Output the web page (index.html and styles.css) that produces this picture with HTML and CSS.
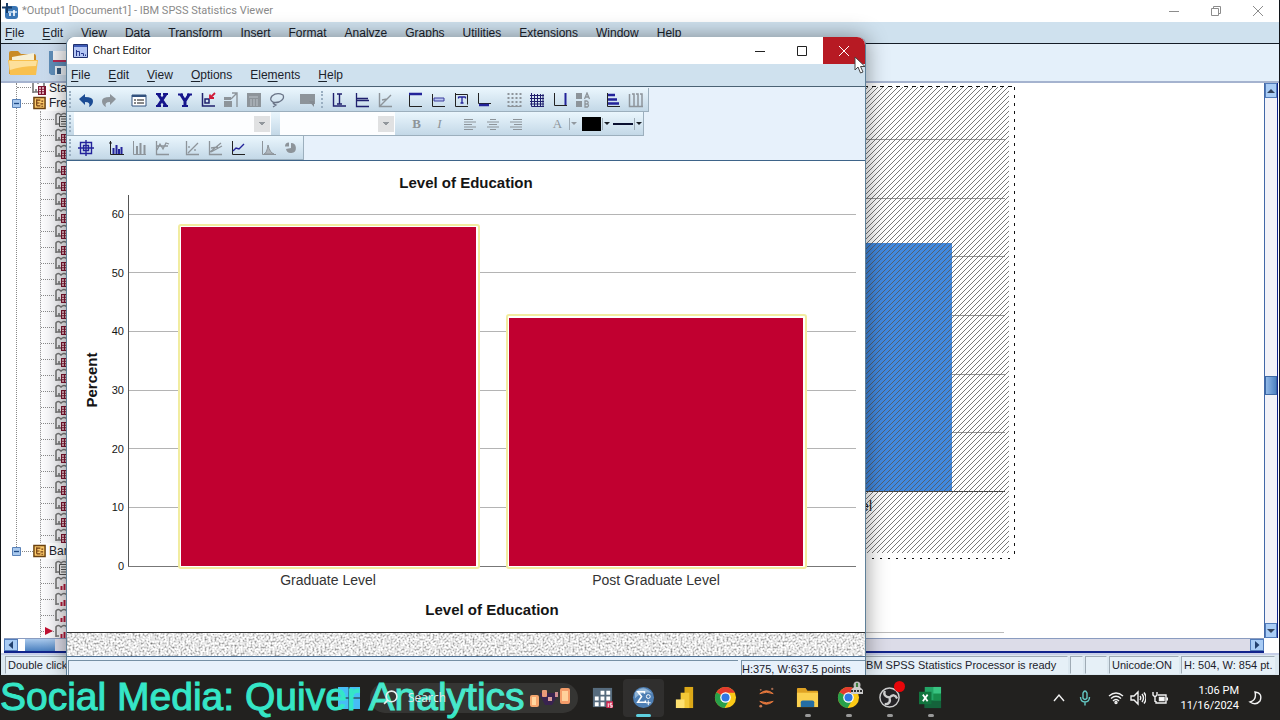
FILE: index.html
```html
<!DOCTYPE html>
<html lang="en">
<head>
<meta charset="utf-8">
<title>Output1 - IBM SPSS Statistics Viewer</title>
<link rel="stylesheet" href="styles.css">
</head>
<body>
<svg class="defs" aria-hidden="true">
  <symbol id="i-book" viewBox="0 0 16 16"><path d="M2 14V4q2-3 5 0q3-3 6 0v4M2 13h5M5 10v3" fill="none" stroke="#777" stroke-width="1.6"/><path d="M7 7h8v9H7z" fill="#7d1530"/><path d="M8 9h2M11 9h2M8 11.500h2M11 11.500h2M8 14h2M11 14h2" stroke="#f3d4da" stroke-width="1.400"/></symbol>
  <symbol id="i-note" viewBox="0 0 16 16"><path d="M2 14V4q2-3 5 0q3-3 6 0v4M2 13h3" fill="none" stroke="#777" stroke-width="1.6"/><path d="M5.500 5.500h9v10h-9z" fill="#eee" stroke="#555"/><path d="M7 8h6M7 10.500h6M7 13h6" stroke="#555"/></symbol>
  <symbol id="i-bars" viewBox="0 0 16 16"><path d="M2 14V4q2-3 5 0q3-3 6 0v4M2 13h3" fill="none" stroke="#777" stroke-width="1.6"/><path d="M6 6h9v10H6z" fill="#f8f2f3"/><path d="M7.500 11v4M10.500 9v6M13.500 6v9" stroke="#b01838" stroke-width="2"/></symbol>
  <symbol id="i-log" viewBox="0 0 14 14"><path d="M1 1h12v12H1z" fill="#fbc96a" stroke="#6b4210" stroke-width="1.600"/><path d="M4 3v7M4 4h4M4 7h3M4 10h4M9 5h2M8 8h3M9 10.500h2" stroke="#713d10" stroke-width="1.300"/></symbol>
  <symbol id="i-minus" viewBox="0 0 9 9"><path d="M.5.5h8v8h-8z" fill="#a9c9ee" stroke="#5a82b8"/><path d="M2 4.500h5" stroke="#204a86" stroke-width="1.300"/></symbol>
  <symbol id="i-chrome" viewBox="0 0 24 24"><circle cx="12" cy="12" r="11" fill="#fbc916"/><path d="M12 12L2.500 6.500A11 11 0 0 1 21.500 6.500H12z" fill="#e33b2e"/><path d="M2.500 6.500A11 11 0 0 0 11 23l5-8.500L12 12z" fill="#27a04b"/><path d="M12 6.500h9.500" stroke="#e33b2e"/><circle cx="12" cy="12" r="5.500" fill="#fff"/><circle cx="12" cy="12" r="4.200" fill="#2f78e4"/></symbol>
  <symbol id="i-left" viewBox="0 0 8 8"><path d="M6 0v8L1.500 4z" fill="#22406e"/></symbol>
  <symbol id="i-right" viewBox="0 0 8 8"><path d="M2 0v8l4.500-4z" fill="#22406e"/></symbol>
  <symbol id="i-up" viewBox="0 0 8 8"><path d="M0 6h8L4 2z" fill="#33425c"/></symbol>
  <symbol id="i-down" viewBox="0 0 8 8"><path d="M0 2h8L4 6z" fill="#33425c"/></symbol>
</svg>

<div class="desktop">
  <section class="viewer" aria-label="Output viewer">
    <header class="titlebar">
      <svg class="app-icon" viewBox="0 0 16 16"><rect x="3" y="3" width="13" height="13" rx="3" fill="#3a76b5"/><path d="M6 9h9" stroke="#a9c9e8" stroke-width="2"/><path d="M8 13v-3M12 13V7" stroke="#fff" stroke-width="1.600"/><path d="M5 0v10M0 4.500h10" stroke="#173b66" stroke-width="2"/></svg>
      <h1>*Output1 [Document1] - IBM SPSS Statistics Viewer</h1>
      <div class="win-controls">
        <button aria-label="Minimize"><svg viewBox="0 0 10 10"><path d="M0 5.500h10"/></svg></button>
        <button aria-label="Restore"><svg viewBox="0 0 10 10"><path d="M.5 2.500h7v7h-7zM2.500 2.500v-2h7v7h-2"/></svg></button>
        <button aria-label="Close"><svg viewBox="0 0 10 10"><path d="M0 0l10 10M10 0L0 10"/></svg></button>
      </div>
    </header>
    <nav class="menubar">
      <button><u>F</u>ile</button><button><u>E</u>dit</button><button><u>V</u>iew</button><button><u>D</u>ata</button><button><u>T</u>ransform</button><button><u>I</u>nsert</button><button>F<u>o</u>rmat</button><button><u>A</u>nalyze</button><button><u>G</u>raphs</button><button><u>U</u>tilities</button><button>E<u>x</u>tensions</button><button><u>W</u>indow</button><button><u>H</u>elp</button>
    </nav>
    <div class="viewer-tools">
      <button aria-label="Open"><svg width="30" height="26" viewBox="0 0 30 26"><path d="M1 24V3q0-2 2-2h7l3 3h13q2 0 2 2v18z" fill="#c98a25"/><path d="M4 7L26 3v8H4z" fill="#f7f0d6"/><path d="M0 10h30l-2 15H2z" fill="#f8c04e"/><path d="M1 11h28l-1 5Q14 16 2 20z" fill="#fde09a"/></svg></button>
      <button aria-label="Save"><svg width="26" height="26" viewBox="0 0 26 26"><path d="M1 1h22l2 2v22H3l-2-2z" fill="#5f8db8"/><path d="M5 1h16v11H5z" fill="#f4f4f6"/><path d="M5 10h16v2H5z" fill="#b52c55"/><path d="M7 16h12v9H7z" fill="#e8eef4"/><path d="M9 18h4v6H9z" fill="#35597e"/></svg></button>
    </div>
    <div class="panes">
      <aside class="outline">
        <div class="tree">
          <ul class="root">
            <li class="leaf"><svg><use href="#i-book"/></svg>Statistics</li>
            <li class="node"><svg class="toggle"><use href="#i-minus"/></svg><svg class="log"><use href="#i-log"/></svg>Frequencies
              <ul>
                <li><svg><use href="#i-note"/></svg></li>
                <li><svg><use href="#i-book"/></svg></li><li><svg><use href="#i-book"/></svg></li><li><svg><use href="#i-book"/></svg></li><li><svg><use href="#i-book"/></svg></li><li><svg><use href="#i-book"/></svg></li>
                <li><svg><use href="#i-book"/></svg></li><li><svg><use href="#i-book"/></svg></li><li><svg><use href="#i-book"/></svg></li><li><svg><use href="#i-book"/></svg></li><li><svg><use href="#i-book"/></svg></li>
                <li><svg><use href="#i-book"/></svg></li><li><svg><use href="#i-book"/></svg></li><li><svg><use href="#i-book"/></svg></li><li><svg><use href="#i-book"/></svg></li><li><svg><use href="#i-book"/></svg></li>
                <li><svg><use href="#i-book"/></svg></li><li><svg><use href="#i-book"/></svg></li><li><svg><use href="#i-book"/></svg></li><li><svg><use href="#i-book"/></svg></li><li><svg><use href="#i-book"/></svg></li>
                <li><svg><use href="#i-book"/></svg></li><li><svg><use href="#i-book"/></svg></li><li><svg><use href="#i-book"/></svg></li><li><svg><use href="#i-book"/></svg></li><li><svg><use href="#i-book"/></svg></li>
                <li><svg><use href="#i-book"/></svg></li>
              </ul>
            </li>
            <li class="node"><svg class="toggle"><use href="#i-minus"/></svg><svg class="log"><use href="#i-log"/></svg>Bar Chart
              <ul>
                <li><svg><use href="#i-note"/></svg></li><li><svg><use href="#i-bars"/></svg></li><li><svg><use href="#i-bars"/></svg></li><li><svg><use href="#i-bars"/></svg></li>
                <li class="current"><svg><use href="#i-bars"/></svg></li>
              </ul>
            </li>
          </ul>
        </div>
        <div class="hscroll"><button aria-label="Scroll left"><svg><use href="#i-left"/></svg></button><span class="thumb"></span></div>
      </aside>
      <main class="document">
        <div class="page">
          <svg width="860" height="554" viewBox="160 83 860 554" role="img" aria-label="Bar chart being edited">
            <defs><pattern id="hatch" width="15" height="5" patternUnits="userSpaceOnUse"><path d="M-1 6L6 -1M4 6L11 -1M9 6L16 -1M-6 6L1 -1M14 6L21 -1" stroke="#555" stroke-width=".8"/></pattern></defs>
            <path d="M160 139.500h845M160 198.500h845M160 256.500h845M160 315.500h845M160 374.500h845M160 432.500h845" stroke="#999"/>
            <path d="M700 243h252v248H700z" fill="#4189e0"/>
            <path d="M160 491.500h845" stroke="#444"/>
            <text x="872" y="511" text-anchor="end" class="cat">Post Graduate Level</text>
            <path d="M160 87h849v466H160z" fill="url(#hatch)"/>
            <path d="M160 86.500h854" stroke="#111" stroke-dasharray="4 4"/>
            <path d="M160 558.500h854" stroke="#111" stroke-dasharray="2 6"/>
            <path d="M1014.500 87v470" stroke="#111" stroke-dasharray="3 5"/>
            <path d="M160 632.500h844" stroke="#bbb"/>
          </svg>
        </div>
        <div class="vscroll"><button aria-label="Scroll up"><svg><use href="#i-up"/></svg></button><div class="track"><span class="thumb"></span></div><button aria-label="Scroll down"><svg><use href="#i-down"/></svg></button></div>
        <div class="hscroll end"><button aria-label="Scroll right"><svg><use href="#i-right"/></svg></button></div>
      </main>
    </div>
    <footer class="viewer-status">
      <span class="grow">Double click to edit</span><span class="proc">IBM SPSS Statistics Processor is ready</span><span class="s1"></span><span class="s2"></span><span class="uni">Unicode:ON</span><span class="dim">H: 504, W: 854 pt.</span>
    </footer>
  </section>

  <section class="editor" aria-label="Chart Editor">
    <header class="editor-title">
      <svg class="ed-icon" viewBox="0 0 15 14"><path d="M.5.5h14v13H.5z" fill="#b4c6f4" stroke="#20306e"/><path d="M1 1h13v2H1z" fill="#3e5bb5"/><path d="M3.500 6v6M3.500 7.500h3V12M8 9.500h2.500V12M12.500 10.500V12" stroke="#27388c" fill="none"/></svg>
      <h2>Chart Editor</h2>
      <div class="win-controls dark">
        <button aria-label="Minimize"><svg viewBox="0 0 10 10"><path d="M0 5.500h10"/></svg></button>
        <button aria-label="Maximize"><svg viewBox="0 0 10 10"><path d="M.5.5h9v9h-9z"/></svg></button>
        <button class="close" aria-label="Close"><svg viewBox="0 0 10 10"><path d="M0 0l10 10M10 0L0 10"/></svg></button>
      </div>
    </header>
    <nav class="menubar editor-menu">
      <button><u>F</u>ile</button><button><u>E</u>dit</button><button><u>V</u>iew</button><button><u>O</u>ptions</button><button>Ele<u>m</u>ents</button><button><u>H</u>elp</button>
    </nav>
    <div class="toolbars">
      <div class="bar">
        <i class="grip"></i>
        <div class="grp">
          <button aria-label="Undo"><svg viewBox="0 0 16 16"><path d="M1 7l6-5v3q8 0 8 4q0 4-4 6q2-5-4-5v3z" fill="#1c4c94"/></svg></button>
          <button aria-label="Redo" class="off"><svg viewBox="0 0 16 16"><path d="M15 7L9 2v3q-8 0-8 4q0 4 4 6q-2-5 4-5v3z" fill="currentColor"/></svg></button>
        </div>
        <div class="grp">
          <button aria-label="Properties"><svg viewBox="0 0 16 16"><path d="M1 3h14v11H1z" fill="#fff" stroke="#33527e"/><path d="M1 4h14" stroke="#33527e" stroke-width="2"/><path d="M3 8h2M6 8h7M3 11h2M6 11h7" stroke="#111"/></svg></button>
          <button aria-label="X axis"><svg viewBox="0 0 16 16"><path d="M2 2h5M9 2h5M2 14h5M9 14h5" stroke="#16168c" stroke-width="2"/><path d="M4 2l8 12M12 2L4 14" stroke="#16168c" stroke-width="3"/></svg></button>
          <button aria-label="Y axis"><svg viewBox="0 0 16 16"><path d="M1 2.500h5M10 2.500h5M5 14h6" stroke="#16168c" stroke-width="2"/><path d="M3.500 2L8 9l4.500-7M8 8v6" fill="none" stroke="#16168c" stroke-width="3"/></svg></button>
          <button aria-label="Select markers"><svg viewBox="0 0 16 16"><path d="M2.500 1v13H15M5 7h4v4H5z" fill="none" stroke="currentColor" stroke-width="1.500"/><path d="M15 1l-5 5M10 2.500V6h4" stroke="#d01b38" stroke-width="1.800" fill="none"/></svg></button>
          <button aria-label="Rescale" class="off"><svg viewBox="0 0 16 16"><path d="M1 9h8v6H1zM1 5h7v3H1z" fill="currentColor"/><path d="M8 7l6-6M9 1h5v14" fill="none" stroke="currentColor" stroke-width="1.400"/></svg></button>
          <button aria-label="Bin" class="off"><svg viewBox="0 0 16 16"><path d="M1 1h14v14H1z" fill="currentColor"/><path d="M3 5h9M5 7v7M8 7v7M11 7v7" stroke="#bcc3ca"/></svg></button>
          <button aria-label="Lasso"><svg viewBox="0 0 16 16"><path d="M4 10Q0 8 3 4q5-4 11-1q2 4-4 7q-4 1-6 0q0 2 3 3l-3 2" fill="none" stroke="#697386" stroke-width="1.300"/></svg></button>
        </div>
        <div class="grp"><button aria-label="Hide" class="off"><svg viewBox="0 0 16 16"><path d="M1 2h15v10H1z" fill="currentColor"/><path d="M10 9l5 6V9z" fill="#858b92"/></svg></button></div>
        <i class="grip split"></i>
        <div class="grp">
          <button aria-label="Reference line X"><svg viewBox="0 0 16 16"><path d="M2.500 1v13H15M8.500 2v10M6 2h5M6 12h5" fill="none" stroke="currentColor" stroke-width="1.400"/></svg></button>
          <button aria-label="Reference line Y"><svg viewBox="0 0 16 16"><path d="M2.500 1v13.500H15M3 8.500h12M3 6.500h11" fill="none" stroke="currentColor" stroke-width="1.300"/></svg></button>
          <button aria-label="Reference line equation" class="off"><svg viewBox="0 0 16 16"><path d="M2.500 1v13.500H15M3 14L14 3M5 8l5-1" fill="none" stroke="currentColor" stroke-width="1.400"/></svg></button>
        </div>
        <div class="grp">
          <button aria-label="Title"><svg viewBox="0 0 16 16"><path d="M2.500 2v12.500H15" fill="none" stroke="#222"/><path d="M2 2h13" stroke="#23239a" stroke-width="2.500"/></svg></button>
          <button aria-label="Annotation"><svg viewBox="0 0 16 16"><path d="M2.500 2v12.500H15" fill="none" stroke="#222"/><path d="M4 9V6h10v3H4" fill="#b9c6f0" stroke="#3c3c9d"/></svg></button>
          <button aria-label="Text box"><svg viewBox="0 0 16 16"><path d="M2.500 1v13.500H15M2.500 2.500h12v10" fill="none" stroke="#222"/><path d="M6 5h6M9 5v6M7.500 11h3M5.500 4.500v2M12.500 4.500v2" stroke="#23239a" stroke-width="1.300"/></svg></button>
          <button aria-label="Footnote"><svg viewBox="0 0 16 16"><path d="M2.500 1v10.500H15" fill="none" stroke="#222"/><path d="M3 13h10" stroke="#23239a" stroke-width="2.500"/></svg></button>
        </div>
        <div class="grp">
          <button aria-label="Hide grid lines" class="off"><svg viewBox="0 0 16 16"><path d="M2.500 1v14M6.500 1v14M10.500 1v14M14.500 1v14" stroke="currentColor" stroke-width="2" stroke-dasharray="2 2"/><path d="M2 14.500h13" stroke="currentColor"/></svg></button>
          <button aria-label="Grid lines"><svg viewBox="0 0 16 16"><path d="M2.500 1v13.500H15M5.500 2v12M8.500 2v12M11.500 2v12M14 2v12M1 3.500h14M1 6.500h14M1 9.500h14M1 12h14" fill="none" stroke="currentColor"/></svg></button>
          <button aria-label="Derived axis"><svg viewBox="0 0 16 16"><path d="M2.500 1v12.500H15" fill="none" stroke="#222"/><path d="M13.500 1v12" stroke="#23239a" stroke-width="2"/></svg></button>
          <button aria-label="Legend" class="off"><svg viewBox="0 0 16 16"><path d="M1 1h6v6H1zM1 9h6v6H1z" fill="currentColor"/><path d="M9.500 7l2.500-6 2.500 6M10.500 5h3M10 9v6h2.500q2-1.500 0-3q1.500-2-.5-3z M10 12h2" fill="none" stroke="currentColor" stroke-width="1.300"/></svg></button>
        </div>
        <div class="grp">
          <button aria-label="Transpose"><svg viewBox="0 0 16 16"><path d="M2.500 1v13.500H15" fill="none" stroke="#222"/><path d="M3 3h7M3 7.500h9M3 11.500h11" stroke="#23239a" stroke-width="2.600"/></svg></button>
          <button aria-label="Scale to 100%" class="off"><svg viewBox="0 0 16 16"><path d="M1.500 2v12.500H15M4 2h2v12M8 2h2v12M12 2h2v12" fill="none" stroke="currentColor" stroke-width="1.500"/></svg></button>
        </div>
      </div>
      <div class="bar format">
        <i class="grip"></i>
        <select class="family" aria-label="Font family" disabled><option></option></select>
        <select class="size" aria-label="Font size" disabled><option></option></select>
        <div class="grp first">
          <button class="off glyph" aria-label="Bold"><b>B</b></button>
          <button class="off glyph" aria-label="Italic"><em>I</em></button>
        </div>
        <div class="grp">
          <button aria-label="Align left" class="off"><svg viewBox="0 0 16 16"><path d="M2 3.500h9M2 6h12M2 8.500h8M2 11h12M2 13.500h9" stroke="currentColor"/></svg></button>
          <button aria-label="Align center" class="off"><svg viewBox="0 0 16 16"><path d="M5 3.500h6M2 6h12M4 8.500h8M2 11h12M5 13.500h6" stroke="currentColor"/></svg></button>
          <button aria-label="Align right" class="off"><svg viewBox="0 0 16 16"><path d="M5 3.500h9M2 6h12M6 8.500h8M2 11h12M5 13.500h9" stroke="currentColor"/></svg></button>
        </div>
        <div class="grp colors">
          <button class="off glyph" aria-label="Text color">A</button>
          <button class="caret off" aria-label="Text color options"></button>
          <button class="fill" aria-label="Fill color"></button>
          <button class="caret" aria-label="Fill options"></button>
          <button class="line" aria-label="Line style"></button>
          <button class="caret" aria-label="Line options"></button>
        </div>
      </div>
      <div class="bar">
        <i class="grip"></i>
        <div class="grp"><button aria-label="Explode"><svg viewBox="0 0 16 16"><path d="M2.500 2.500h11v11h-11zM5.500 5.500h5v5h-5zM8 0v16M0 8h16" fill="none" stroke="#23239a" stroke-width="1.400"/></svg></button></div>
        <div class="grp">
          <button aria-label="Data labels"><svg viewBox="0 0 16 16"><path d="M2.500 1v13.500H16M1 3h3" fill="none" stroke="#222"/><path d="M5.500 8v6M8.500 5v9M11 9v5M13.500 7v7" stroke="#23239a" stroke-width="2"/></svg></button>
          <button aria-label="Error bars" class="off"><svg viewBox="0 0 16 16"><path d="M2.500 1v13.500H15" fill="none" stroke="currentColor"/><path d="M6 6v8M9.500 3v11M13.500 5v9" stroke="currentColor" stroke-width="2"/></svg></button>
          <button aria-label="Markers" class="off"><svg viewBox="0 0 16 16"><path d="M2.500 1v13.500H15M3 10l3-6 3 5 3-6 3 1M3 6h11" fill="none" stroke="currentColor" stroke-width="1.300"/></svg></button>
        </div>
        <div class="grp">
          <button aria-label="Fit line" class="off"><svg viewBox="0 0 16 16"><path d="M2.500 1v13.500H15M4 13L14 3M5 6v2M11 9v2" fill="none" stroke="currentColor" stroke-width="1.300"/></svg></button>
          <button aria-label="Fit subgroups" class="off"><svg viewBox="0 0 16 16"><path d="M2.500 1v13.500H15M3 12L14 3M4 12l11-6M4 8l7-1" fill="none" stroke="currentColor" stroke-width="1.300"/></svg></button>
          <button aria-label="Interpolate"><svg viewBox="0 0 16 16"><path d="M2.500 1v13.500H15" fill="none" stroke="#222"/><path d="M3 11l3-3 3 1 5-5" fill="none" stroke="#23239a" stroke-width="1.400"/></svg></button>
        </div>
        <div class="grp">
          <button aria-label="Distribution curve" class="off"><svg viewBox="0 0 16 16"><path d="M2.500 1v13.500H16" fill="none" stroke="currentColor"/><path d="M4 14q3-1 4-9q2 8 6 9z" fill="#aeb4ba" stroke="currentColor"/></svg></button>
          <button aria-label="Explode slice" class="off"><svg viewBox="0 0 16 16"><path d="M8 8V3a5 5 0 1 1-5 6z" fill="currentColor"/><path d="M6 6.500H2q0-4 4-4z" fill="currentColor"/></svg></button>
        </div>
      </div>
    </div>
    <svg class="chart" viewBox="67 161 798 471" role="img" aria-label="Level of Education bar chart">
      <path d="M128 214.500h728M128 272.500h728M128 331.500h728M128 390.500h728M128 448.500h728M128 507.500h728" stroke="#b4b4b4"/>
      <path d="M128.500 195v371" stroke="#555"/>
      <path d="M128 566.500h728" stroke="#777"/>
      <g fill="#c10030" stroke="#f1eca0" stroke-width="2">
        <rect x="179" y="225" width="300" height="343" rx="2" fill="#fff"/><rect x="507" y="315" width="299" height="253" rx="2" fill="#fff"/>
        <path d="M181 227h295v339H181zM509 318h294v248H509z" stroke="none"/>
      </g>
      <g class="tick"><text x="124" y="218">60</text><text x="124" y="277">50</text><text x="124" y="335">40</text><text x="124" y="394">30</text><text x="124" y="453">20</text><text x="124" y="511">10</text><text x="124" y="570">0</text></g>
      <text class="heading" x="466" y="188">Level of Education</text>
      <text class="heading" x="492" y="615">Level of Education</text>
      <text class="heading" transform="translate(97 380) rotate(-90)">Percent</text>
      <text class="cat" x="328" y="585">Graduate Level</text>
      <text class="cat" x="656" y="585">Post Graduate Level</text>
    </svg>
    <svg class="texture" aria-hidden="true"><filter id="grain" x="0" y="0" width="100%" height="100%"><feTurbulence type="fractalNoise" baseFrequency=".5" numOctaves="2" seed="4"/><feColorMatrix values="1.8 0 0 0 -.1  1.8 0 0 0 -.1  1.8 0 0 0 -.1  0 0 0 0 1"/></filter><rect width="100%" height="100%" filter="url(#grain)"/></svg>
    <footer class="editor-status"><span></span><span class="points">H:375, W:637.5 points</span></footer>
    <svg class="cursor" viewBox="0 0 12 18" aria-hidden="true"><path d="M1 1v13l3-3 2.500 6 2.500-1-2.500-5.500H11z" fill="#fff" stroke="#444"/></svg>
  </section>

  <footer class="taskbar">
    <p class="caption">Social Media: Quiver Analytics</p>
    <button class="start" aria-label="Start"><svg viewBox="0 0 22 22"><path d="M0 0h10.500v10.500H0zM11.500 0H22v10.500H11.500zM0 11.500h10.500V22H0zM11.500 11.500H22V22H11.500z" fill="#47bdf5"/></svg></button>
    <label class="search">
      <svg class="lens" viewBox="0 0 14 14"><circle cx="8" cy="6" r="5"/><path d="M4.500 9.500L1 13"/></svg>
      <input type="search" placeholder="Search" aria-label="Search">
      <svg class="lanterns" viewBox="0 0 42 20"><path d="M10 5h20l-7 12h-7z" fill="#38234f"/><rect x="1" y="7" width="9" height="12" rx="2" fill="#f5a66e"/><rect x="3" y="9" width="4" height="8" fill="#ffd7a0"/><rect x="13" y="2" width="5" height="7" rx="1" fill="#e99a78"/><rect x="19" y="9" width="4" height="4" fill="#da9b9a"/><rect x="26" y="4" width="3" height="5" fill="#cf8e92"/><rect x="31" y="0" width="10" height="16" rx="2" fill="#f49c69"/><rect x="33" y="3" width="6" height="10" fill="#ffd09b"/></svg>
    </label>
    <div class="apps">
      <button aria-label="Calendar grid"><svg viewBox="0 0 24 24"><path d="M2 2h20v20H2z" fill="#566b7d"/><path d="M10 5h4v4h-4zM16 5h4v4h-4zM4 11h4v4H4zM10 11h4v4h-4zM16 11h4v4h-4zM4 17h4v4H4zM10 17h4v4h-4z" fill="#fff"/><path d="M16 16h7v7h-7z" fill="#d42850"/><path d="M18 18v4M22 18h-2v2h2v2h-2" stroke="#fff" fill="none"/></svg></button>
      <button class="active" aria-label="SPSS Statistics"><svg viewBox="0 0 24 24"><circle cx="12" cy="12" r="11" fill="#4e7fb4"/><path d="M3 7Q12-3 21 8Q12 4 3 13z" fill="#91b4d5"/><path d="M13 8V6H6l4 5-4 6h8v-2" fill="none" stroke="#fff" stroke-width="1.600"/><circle cx="17" cy="11" r="2" fill="none" stroke="#fff"/><path d="M17 15v5M14.500 17.500h5" stroke="#fff"/></svg></button>
      <button aria-label="Power BI"><svg viewBox="0 0 24 24"><path d="M12 1h9v22h-9z" fill="#dca817"/><path d="M8 7h9v16H8z" fill="#f2c737"/><path d="M3 14h9v9H3z" fill="#fee170"/></svg></button>
      <button aria-label="Chrome"><svg><use href="#i-chrome"/></svg></button>
      <button aria-label="Jupyter"><svg viewBox="0 0 24 24"><path d="M5 8q7-6 14 0q-7-3-14 0M5 16q7 6 14 0q-7 3-14 0" fill="#e7783d" stroke="#e7783d"/><circle cx="6" cy="21" r="1.500" fill="#c77951"/><circle cx="18" cy="3" r="1.200" fill="#a66b50"/><circle cx="6" cy="4" r="1" fill="#a66b50"/></svg></button>
      <button class="open" aria-label="File Explorer"><svg viewBox="0 0 24 24"><path d="M1 3q0-1 1-1h8l2 3h10q1 0 1 1v16H1z" fill="#dfa223"/><path d="M1 7h22v15H1z" fill="#fbd04f"/><path d="M5 22v-5q0-2 2-2h10q2 0 2 2v5z" fill="#246da4"/></svg></button>
      <button class="open" aria-label="Chrome profile"><svg><use href="#i-chrome"/></svg><svg class="badge" viewBox="0 0 14 14"><circle cx="7" cy="4" r="3.500" fill="#bbb"/><path d="M1 9l3-3h6l3 3v4H1z" fill="#ccc"/><path d="M1 10h12" stroke="#333" stroke-width="2" stroke-dasharray="2 1"/><path d="M7 2v4" stroke="#3e803e" stroke-width="2"/></svg></button>
      <button class="open" aria-label="OBS Studio"><svg viewBox="0 0 24 24"><circle cx="12" cy="12" r="10" fill="#242225" stroke="#ccc" stroke-width="1.500"/><path d="M12 12q-7-1-5-7M12 12q5-5 8 1M12 12q2 7-5 7" fill="none" stroke="#ccc" stroke-width="2.500"/></svg><i class="badge rec"></i></button>
      <button class="open" aria-label="Excel"><svg viewBox="0 0 24 24"><path d="M6 1h17v22H6z" fill="#23a566"/><path d="M15 1h8v7h-8z" fill="#38c481"/><path d="M6 15h17v8H6z" fill="#14633b"/><path d="M15 8h8v7h-8z" fill="#178d4c"/><path d="M0 6h13v13H0z" fill="#11753e"/><path d="M4 9l5 7M9 9l-5 7" stroke="#fff" stroke-width="1.800"/></svg></button>
    </div>
    <div class="tray">
      <button class="chev" aria-label="Show hidden icons"><svg viewBox="0 0 16 16"><path d="M3 11l5-6 5 6"/></svg></button>
      <button class="mic" aria-label="Microphone"><svg viewBox="0 0 16 16"><path d="M6 3q2-4 4 0v5q-2 3-4 0zM3.500 7q0 5 4.500 5t4.500-5M8 12v3.500"/></svg></button>
      <button class="status-icons" aria-label="Network, sound and battery">
        <svg viewBox="0 0 16 16"><path d="M1 6q7-6 14 0M3 8.500q5-4.500 10 0M5 11q3-3 6 0" /><circle cx="8" cy="12.500" r="1"/></svg>
        <svg viewBox="0 0 16 16"><path d="M1 6h3l4-4v12l-4-4H1zM10 6q1.500 2 0 4M12 4q3 4 0 8M14 2.500q4 5.500 0 11"/></svg>
        <svg viewBox="0 0 16 16"><path d="M6 5h8v8H4v-2M15.500 7.500v3M1 2v3q2 3 4 0V2M3 6v6"/><path d="M7.500 7.500H12v3H7.500z" fill="#fff"/></svg>
      </button>
      <time class="clock"><span>1:06 PM</span><span>11/16/2024</span></time>
      <button class="moon" aria-label="Notifications"><svg viewBox="0 0 16 16"><path d="M8 2q8 1 5 9q-4 5-10 1q7-2 5-10z"/></svg></button>
    </div>
  </footer>
</div>
</body>
</html>
```
FILE: styles.css
```css
* { box-sizing: border-box; }
body { margin: 0; font-family: "Liberation Sans", Arial, sans-serif; font-size: 12px; color: #1b222b; }
button { border: 0; padding: 0; margin: 0; background: none; font: inherit; color: inherit; }
h1, h2, p, ul { margin: 0; padding: 0; font-weight: 400; }
svg { display: block; flex: none; }
.defs { position: absolute; width: 0; height: 0; }
.desktop { position: relative; height: 100vh; min-height: 500px; display: grid; grid-template-rows: minmax(0, 1fr) 45px; overflow: hidden; }

/* Viewer window */
.viewer { display: flex; flex-direction: column; min-height: 0; min-width: 0; background: #fff; border: solid #101418; border-width: 0 1px; }
.titlebar { display: flex; align-items: center; height: 22px; color: #8a8a8a; }
.app-icon { width: 16px; height: 16px; margin: 0 4px 0 1px; }
h1, h2 { font-family: Roboto, "Open Sans", sans-serif; font-size: 11px; line-height: 20px; }
.win-controls { display: flex; align-self: stretch; margin-left: auto; }
.win-controls button { width: 42px; display: grid; place-items: center; }
.win-controls svg { width: 10px; height: 10px; fill: none; stroke: #8c8c8c; }
.win-controls.dark svg { stroke: #222; }
.menubar { display: flex; gap: 18px; height: 22px; padding: 0 4px; background: #cfe1ee; border-bottom: 1px solid #141c26; white-space: nowrap; flex: none; }
.menubar u { text-underline-offset: 2px; }
.viewer-tools { display: flex; align-items: center; gap: 10px; height: 39px; padding: 0 7px; background: linear-gradient(90deg, #bfd2e7, #e4f0fa 12%); border-bottom: 2px solid #a5b3cf; flex: none; }
.panes { flex: 1; display: grid; grid-template-columns: 159px minmax(0, 1fr); min-height: 0; border-bottom: 2px solid #c7cfe8; }
.outline { display: flex; flex-direction: column; min-width: 0; min-height: 0; }
.tree { flex: 1; overflow: hidden; min-height: 0; padding-left: 15px; }
.tree ul { list-style: none; }
.root { position: relative; }
.root::before { content: ""; position: absolute; left: 0; top: 0; height: 466px; border-left: 1px dotted #888; }
.leaf, .node { line-height: 16px; position: relative; white-space: nowrap; }
.leaf { height: 12px; line-height: 10px; padding-left: 33px; }
.leaf svg { position: absolute; left: 15px; top: -4px; width: 16px; height: 16px; }
.leaf::before { content: ""; position: absolute; left: 1px; width: 14px; top: 4px; border-top: 1px dotted #888; }
.node { padding-left: 33px; }
.node > svg { position: absolute; }
.toggle { width: 9px; height: 9px; left: -4px; top: 4px; }
.log { width: 13px; height: 14px; left: 17px; top: 1px; }
.node::before { content: ""; position: absolute; left: 6px; width: 11px; top: 8px; border-top: 1px dotted #888; }
.node ul { margin-left: -9px; border-left: 1px dotted #999; background: linear-gradient(90deg, #fcfcfd, #ececf0 26px); }
.node li { height: 16px; display: flex; align-items: center; position: relative; }
.node li::before { content: ""; width: 13px; border-top: 1px dotted #888; }
.node li svg { width: 16px; height: 16px; }
.current::after { content: ""; position: absolute; left: 4px; top: 4px; border: solid transparent; border-width: 4px 0 4px 8px; border-left-color: #c11031; }
.hscroll { display: flex; height: 15px; border: solid #10248c; border-width: 1px 0 2px; border-top-color: #8a9cc0; background: #dcdce8; margin-left: 3px; }
.hscroll button, .vscroll button { background: #a9ccf5; border: 1px solid #527cba; display: grid; place-items: center; }
.hscroll button { width: 14px; }
.hscroll svg, .vscroll svg { width: 8px; height: 8px; }
.hscroll .thumb { width: 37px; border-left: 7px solid #fff; background: linear-gradient(#a9c9ec, #4a80bf); }
.document { display: grid; grid-template-columns: minmax(0, 1fr) 14px; grid-template-rows: minmax(0, 1fr) 15px; min-height: 0; padding-right: 1px; }
.page { overflow: hidden; }
.vscroll { display: flex; flex-direction: column; border-left: 1px solid #4268a8; border-right: 1px solid #10248c; background: #f2f2f8; }
.vscroll button { height: 15px; flex: none; }
.track { flex: 1; display: grid; grid-template-rows: 53% 19px 1fr; }
.track .thumb { grid-row: 2; background: linear-gradient(90deg, #91b8e7, #4f82c2); border: 1px solid #3d69a5; }
.end { margin-left: 0; justify-content: flex-end; }
.viewer-status { display: flex; height: 20px; padding: 1px 4px 1px 4px; gap: 2px; background: #dce8f0; font-size: 11px; line-height: 17px; white-space: nowrap; flex: none; }
.viewer-status span { border: 1px solid #9fabb5; border-color: #9fabb5 transparent transparent #9fabb5; padding-left: 2px; background: #e6f0f7; overflow: hidden; }
.grow { flex: 1; }
.proc { width: 208px; }
.s1 { width: 13px; }
.s2 { width: 22px; }
.uni { width: 70px; }
.dim { width: 94px; }

/* Chart editor window */
.editor { position: absolute; left: 66px; top: 37px; bottom: 45px; width: 62.5%; display: flex; flex-direction: column; background: #e7f1fb; border: solid #5f8098; border-width: 0 1px; border-radius: 8px 8px 0 0; box-shadow: 0 0 22px rgba(0, 0, 0, .42); }
.editor-title { display: flex; align-items: center; height: 27px; flex: none; background: #fff; border-radius: 8px 8px 0 0; padding-left: 6px; color: #222; }
.ed-icon { width: 15px; height: 14px; margin-right: 5px; }
.win-controls .close { background: #b71a23; border-radius: 0 8px 0 0; }
.win-controls.dark .close svg { stroke: #fff; }
.editor-menu { gap: 18px; height: 23px; border-bottom-color: #4b6274; }
.toolbars { flex: none; display: flex; flex-direction: column; align-items: flex-start; height: 74px; border-bottom: 1px solid #3e6489; padding-top: 1px; background: #e7f1fb; }
.bar { display: flex; align-items: stretch; height: 24px; flex: none; background: linear-gradient(#eaf6fd, #c3d8e7); border: solid #9cafbd; border-width: 0 1px 1px 0; padding: 0 1px 0 2px; }
.grip { width: 5px; margin: 3px 0; border-left: 2px dotted #9aafc1; }
.split { margin-left: 3px; width: 6px; }
.grp { display: flex; color: #20206e; }
.grp + .grp { margin-left: 7px; }
.grp button { width: 23px; display: grid; place-items: center; }
.grp svg { width: 16px; height: 16px; }
.off { color: #8d949a; }
select { appearance: none; border: 0; border-radius: 0; margin: 0; }
.family, .size { opacity: 1; background-color: #fdfeff; background-image: linear-gradient(to bottom left, #92979c 50%, transparent 50%), linear-gradient(to bottom right, #92979c 50%, transparent 50%), linear-gradient(#e0e1e2, #e0e1e2); background-size: 4px 4px, 4px 4px, 16px 16px; background-position: right 9px top 10px, right 5px top 10px, right 1px top 4px; background-repeat: no-repeat; }
.family { width: 197px; margin-right: 9px; }
.size { width: 115px; margin-right: 10px; }
.glyph { font: 13px "Liberation Serif", serif; }
.grp + .colors { margin-left: 19px; align-items: center; }
.grp .caret { width: 8px; height: 12px; border-left: 1px solid #9eabb5; }
.caret::before { content: ""; border: solid transparent; border-width: 3px 3px 0; border-top-color: #1a1f26; }
.caret.off::before { border-top-color: #9299a0; }
.grp .fill { width: 19px; height: 14px; background: #000; margin: 0 1px 0 5px; }
.grp .line { width: 20px; height: 2px; background: #0a1030; margin: 0 1px 0 3px; }
.chart { width: 100%; height: auto; flex: none; background: #fff; border-bottom: 1px solid #333; }
text { font-family: "Liberation Sans", Arial, sans-serif; fill: #151515; }
.tick { font-size: 11px; text-anchor: end; }
.heading { font-size: 15px; font-weight: 700; text-anchor: middle; }
.cat { font-size: 14px; }
.chart .cat { text-anchor: middle; fill: #333; }
.texture { flex: 1; width: 100%; min-height: 0; height: 0; border-bottom: 1px solid #4e6f91; }
.editor-status { display: flex; gap: 3px; height: 18px; flex: none; padding: 3px 0 0 1px; font-size: 11px; line-height: 16px; }
.editor-status span { flex: 1; border: 1px solid #7690a5; border-width: 1px 0 0 1px; height: 15px; }
.editor-status .points { flex: 0 0 124px; white-space: nowrap; }
.cursor { position: absolute; right: -1px; top: 19px; width: 12px; height: 18px; }

/* Taskbar */
.taskbar { position: relative; display: flex; align-items: center; background: #22211f; color: #fff; padding-left: 338px; min-width: 0; }
.caption { position: absolute; left: 0; top: 0; font-size: 39px; line-height: 43px; color: #35e6c7; -webkit-text-stroke: 1px #35e6c7; white-space: nowrap; z-index: 1; pointer-events: none; }
.start { margin-right: 10px; }
.start svg { width: 22px; height: 22px; }
.search { position: relative; z-index: 2; display: flex; align-items: center; width: 208px; height: 30px; border-radius: 15px; background: rgba(255, 255, 255, .09); padding: 0 7px 0 13px; margin-right: 4px; }
.lens { width: 15px; height: 15px; fill: none; stroke: #e8eeee; stroke-width: 1.5px; }
.search input { flex: 1; min-width: 0; border: 0; padding: 0; margin-left: 10px; background: none; color: #fff; font: 12px "Open Sans", sans-serif; }
.search input::placeholder { color: #dfe9e7; opacity: 1; }
.lanterns { width: 42px; height: 20px; }
.apps { display: flex; align-self: stretch; align-items: center; }
.apps button { position: relative; width: 41px; height: 38px; display: grid; place-items: center; border-radius: 4px; }
.apps svg { width: 23px; height: 23px; }
.apps .active { background: #302f2e; }
.active::after, .open::after { content: ""; position: absolute; left: 18px; bottom: 0; width: 6px; height: 3px; border-radius: 2px; background: #999; }
.active::after { left: 13px; width: 15px; background: #5ed0df; }
.apps .badge { position: absolute; right: 5px; top: 2px; width: 14px; height: 14px; }
.apps .rec { width: 11px; height: 11px; border-radius: 50%; background: #e8060a; }
.tray { display: flex; align-items: center; margin-left: auto; padding-right: 17px; }
.tray svg { width: 16px; height: 16px; fill: none; stroke: #f2f2f2; stroke-width: 1.4px; }
.chev { margin-right: 10px; }
.mic { margin-right: 15px; }
.tray .mic svg { stroke: #65c9c5; }
.status-icons { display: flex; gap: 6px; margin-right: 12px; }
.clock { display: flex; flex-direction: column; text-align: right; font: 11px/15px Roboto, "Open Sans", sans-serif; margin-right: 8px; }
```
